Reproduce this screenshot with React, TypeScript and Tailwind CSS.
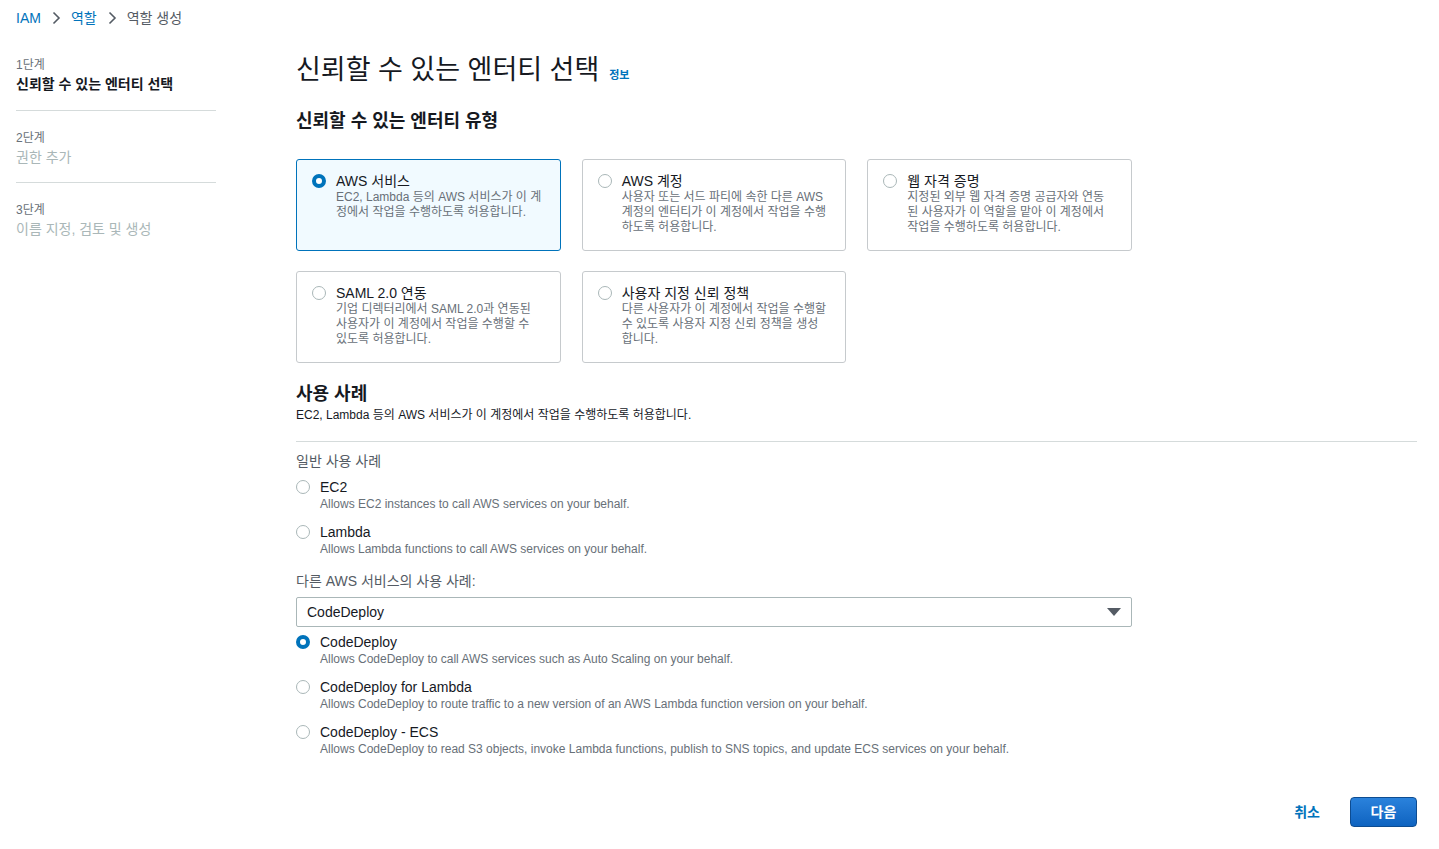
import React from 'react';

const font = { fontFamily: '"Liberation Sans", "Noto Sans CJK KR", sans-serif' };

type Entity = { title: string; desc: string; selected?: boolean };

const entities: Entity[] = [
  { title: 'AWS 서비스', desc: 'EC2, Lambda 등의 AWS 서비스가 이 계정에서 작업을 수행하도록 허용합니다.', selected: true },
  { title: 'AWS 계정', desc: '사용자 또는 서드 파티에 속한 다른 AWS 계정의 엔터티가 이 계정에서 작업을 수행하도록 허용합니다.' },
  { title: '웹 자격 증명', desc: '지정된 외부 웹 자격 증명 공급자와 연동된 사용자가 이 역할을 맡아 이 계정에서 작업을 수행하도록 허용합니다.' },
  { title: 'SAML 2.0 연동', desc: '기업 디렉터리에서 SAML 2.0과 연동된 사용자가 이 계정에서 작업을 수행할 수 있도록 허용합니다.' },
  { title: '사용자 지정 신뢰 정책', desc: '다른 사용자가 이 계정에서 작업을 수행할 수 있도록 사용자 지정 신뢰 정책을 생성합니다.' },
];

function Radio({ checked }: { checked?: boolean }) {
  return checked ? (
    <span className="block w-[14px] h-[14px] rounded-full border-[4px] border-[#0073bb] bg-white shrink-0" />
  ) : (
    <span className="block w-[14px] h-[14px] rounded-full border border-[#aab7b8] bg-white shrink-0" />
  );
}

function Chevron() {
  return (
    <svg width="16" height="16" viewBox="0 0 16 16" className="mx-[7px]">
      <path d="M5.5 2.5 11 8l-5.5 5.5" fill="none" stroke="#545b64" strokeWidth="1.6" />
    </svg>
  );
}

function UseCase({ title, desc, checked }: { title: string; desc: string; checked?: boolean }) {
  return (
    <div className="flex">
      <div className="pt-[2px] mr-[10px]">
        <Radio checked={checked} />
      </div>
      <div>
        <div className="text-[14px] leading-[18px] text-[#16191f]">{title}</div>
        <div className="text-[12px] leading-[16px] text-[#687078]">{desc}</div>
      </div>
    </div>
  );
}

export default function App() {
  return (
    <div className="min-h-screen bg-white" style={font}>
      {/* Breadcrumb */}
      <div className="flex items-center px-4 pt-2 h-[28px] text-[14px] leading-[20px]">
        <span className="text-[#0073bb]">IAM</span>
        <Chevron />
        <span className="text-[#0073bb]">역할</span>
        <Chevron />
        <span className="text-[#545b64]">역할 생성</span>
      </div>

      <div className="flex">
        {/* Steps */}
        <nav className="w-[296px] shrink-0 pl-4 pr-20 pt-[29px]">
          <div className="pb-4 border-b border-[#d5dbdb]">
            <div className="text-[12px] leading-[16px] text-[#687078]">1단계</div>
            <div className="mt-[1px] text-[14px] leading-[20px] font-bold text-[#16191f]">신뢰할 수 있는 엔터티 선택</div>
          </div>
          <div className="pt-[19px] pb-[15px] border-b border-[#d5dbdb]">
            <div className="text-[12px] leading-[16px] text-[#687078]">2단계</div>
            <div className="mt-[1px] text-[14px] leading-[20px] text-[#aab7b8]">권한 추가</div>
          </div>
          <div className="pt-[19px] pb-4">
            <div className="text-[12px] leading-[16px] text-[#687078]">3단계</div>
            <div className="mt-[1px] text-[14px] leading-[20px] text-[#aab7b8]">이름 지정, 검토 및 생성</div>
          </div>
        </nav>

        {/* Main */}
        <main className="flex-1 pr-[22px] pt-[24px]">
          <div className="flex items-baseline">
            <h1 className="text-[27px] leading-[36px] font-normal text-[#16191f]">신뢰할 수 있는 엔터티 선택</h1>
            <span className="ml-[10px] text-[11px] font-bold text-[#0073bb]">정보</span>
          </div>

          <h2 className="mt-[21px] text-[18px] leading-[24px] font-bold text-[#16191f]">신뢰할 수 있는 엔터티 유형</h2>

          <div className="mt-[26px] w-[836px] grid grid-cols-3 gap-x-[21px] gap-y-[20px]">
            {entities.map((e) => (
              <div
                key={e.title}
                className={
                  e.selected
                    ? 'h-[92px] flex rounded-[3px] border border-[#0073bb] bg-[#f1faff] pl-[15px] pr-[18px] pt-[13px]'
                    : 'h-[92px] flex rounded-[3px] border border-[#c6cacd] bg-white pl-[15px] pr-[18px] pt-[13px]'
                }
              >
                <div className="pt-[1px] mr-[10px]">
                  <Radio checked={e.selected} />
                </div>
                <div className="min-w-0">
                  <div className="text-[14px] leading-[16px] text-[#16191f]">{e.title}</div>
                  <div className="mt-[1px] text-[12px] leading-[15px] text-[#687078] break-all">{e.desc}</div>
                </div>
              </div>
            ))}
          </div>

          <h2 className="mt-[19px] text-[18px] leading-[24px] font-bold text-[#16191f]">사용 사례</h2>
          <p className="mt-[1px] text-[12px] leading-[16px] text-[#16191f]">EC2, Lambda 등의 AWS 서비스가 이 계정에서 작업을 수행하도록 허용합니다.</p>

          <div className="mt-[18px] border-t border-[#d5dbdb]" />

          <div className="mt-[9px] text-[14px] leading-[20px] text-[#545b64]">일반 사용 사례</div>
          <div className="mt-[7px] flex flex-col gap-[11px]">
            <UseCase title="EC2" desc="Allows EC2 instances to call AWS services on your behalf." />
            <UseCase title="Lambda" desc="Allows Lambda functions to call AWS services on your behalf." />
          </div>

          <div className="mt-[14px] text-[14px] leading-[20px] text-[#545b64]">다른 AWS 서비스의 사용 사례:</div>
          <div className="mt-[6px] w-[836px] h-[30px] flex items-center justify-between rounded-[2px] border border-[#aab7b8] pl-[10px] pr-[10px]">
            <span className="text-[14px] text-[#16191f]">CodeDeploy</span>
            <svg width="14" height="8" viewBox="0 0 14 8">
              <path d="M0 0h14L7 8z" fill="#545b64" />
            </svg>
          </div>

          <div className="mt-[6px] flex flex-col gap-[11px]">
            <UseCase title="CodeDeploy" desc="Allows CodeDeploy to call AWS services such as Auto Scaling on your behalf." checked />
            <UseCase title="CodeDeploy for Lambda" desc="Allows CodeDeploy to route traffic to a new version of an AWS Lambda function version on your behalf." />
            <UseCase title="CodeDeploy - ECS" desc="Allows CodeDeploy to read S3 objects, invoke Lambda functions, publish to SNS topics, and update ECS services on your behalf." />
          </div>

          <div className="mt-[40px] flex items-center justify-end gap-[18px]">
            <button className="px-[12px] text-[14px] font-bold text-[#0073bb]">취소</button>
            <button className="w-[67px] h-[30px] rounded-[4px] border border-[#0d4c91] bg-gradient-to-b from-[#2a82dc] to-[#0e63c0] text-[14px] font-bold text-white">
              다음
            </button>
          </div>
        </main>
      </div>
    </div>
  );
}
